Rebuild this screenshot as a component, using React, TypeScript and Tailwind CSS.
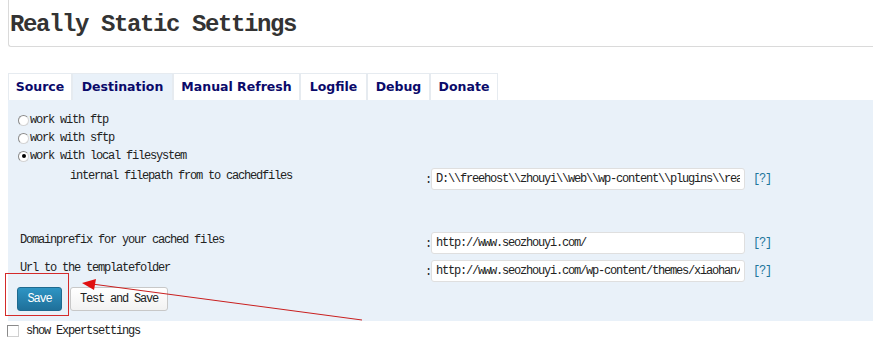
import { useState } from "react";

const mono = "font-['Liberation_Mono',monospace] text-[12px] tracking-[-1.2px] text-[#222]";

const tabs = [
  { name: "Source", w: "w-[64px]" },
  { name: "Destination", w: "w-[101px]" },
  { name: "Manual Refresh", w: "w-[127px]" },
  { name: "Logfile", w: "w-[67px]" },
  { name: "Debug", w: "w-[63px]" },
  { name: "Donate", w: "w-[68px]" },
];

function Radio({ checked }: { checked?: boolean }) {
  return (
    <span className="flex h-[11px] w-[11px] items-center justify-center rounded-full border border-[#8a8a8a] border-b-[#d4d4d4] border-r-[#d4d4d4] bg-white">
      {checked && <span className="h-[4px] w-[4px] rounded-full bg-black" />}
    </span>
  );
}

function Field({ label, value, indent }: { label: string; value: string; indent?: boolean }) {
  return (
    <div className="flex items-start pl-[3px]">
      <div className={`w-[405px] pt-[1px] leading-[14px] ${indent ? "pl-[50px]" : "pl-[0px]"} ${mono}`}>{label}</div>
      <div className={`w-[6px] pt-[5px] leading-[14px] ${mono}`}>:</div>
      <input
        readOnly
        value={value}
        className={`h-[22px] w-[314px] rounded-[3px] border border-[#dfdfdf] bg-white px-[4px] outline-none ${mono}`}
      />
      <a href="#" className={`ml-[8px] pt-[4px] leading-[14px] ${mono} text-[#21759b]`}>
        [?]
      </a>
    </div>
  );
}

export default function App() {
  const [active, setActive] = useState("Destination");
  const [mode, setMode] = useState("local");

  return (
    <div className="relative h-[345px] w-[873px] overflow-hidden bg-white">
      <div className="ml-2 h-[47px] rounded-bl-[3px] border-b border-l border-[#dadada] pl-[1px] pt-[13px]">
        <h2 className="font-['Liberation_Mono',monospace] text-[24px] font-bold leading-[24px] tracking-[-1.4px] text-[#333]">
          Really Static Settings
        </h2>
      </div>

      <div className="ml-2 mt-[26px]">
        <div className="flex h-[27px]">
          {tabs.map((t) => (
            <button
              key={t.name}
              onClick={() => setActive(t.name)}
              className={`h-[27px] ${t.w} border border-b-0 border-[#e6ebf0] font-['DejaVu_Sans',sans-serif] text-[12.5px] font-bold text-[#0a0a6a] ${
                active === t.name ? "bg-[#e9f1f9]" : "bg-white"
              }`}
            >
              {t.name}
            </button>
          ))}
        </div>

        <div className="bg-[#e9f1f9] pb-[10px] pl-[9px] pt-[11px]">
          {[
            ["ftp", "work with ftp"],
            ["sftp", "work with sftp"],
            ["local", "work with local filesystem"],
          ].map(([k, label]) => (
            <div key={k} className="flex h-[18px] items-center pl-[1px]" onClick={() => setMode(k)}>
              <Radio checked={mode === k} />
              <span className={`ml-[1px] ${mono}`}>{label}</span>
            </div>
          ))}

          <div className="mt-[3px]">
            <Field indent label="internal filepath from to cachedfiles" value="D:\\freehost\\zhouyi\\web\\wp-content\\plugins\\really-static\\static\\" />
          </div>
          <div className="mt-[42px]">
            <Field label="Domainprefix for your cached files" value="http://www.seozhouyi.com/" />
          </div>
          <div className="mt-[6px]">
            <Field label="Url to the templatefolder" value="http://www.seozhouyi.com/wp-content/themes/xiaohan/" />
          </div>

          <div className="mt-[5px] flex gap-[8px]">
            <button className={`h-[24px] w-[45px] rounded-[3px] border border-[#1e6a8f] bg-gradient-to-b from-[#2e95c4] to-[#1f709a] ${mono} text-white`}>
              Save
            </button>
            <button className={`h-[24px] w-[98px] rounded-[3px] border border-[#c8c8c8] bg-gradient-to-b from-white to-[#f2f2f2] ${mono}`}>
              Test and Save
            </button>
          </div>
        </div>
      </div>

      <label className="mt-[3px] flex items-center pl-[7px]">
        <span className="h-[12px] w-[12px] border border-[#8a8a8a] border-b-[#d0d0d0] border-r-[#d0d0d0] bg-white" />
        <span className={`ml-[7px] leading-[14px] ${mono}`}>show Expertsettings</span>
      </label>

      {/* annotation overlay */}
      <div className="absolute left-[5px] top-[273px] h-[43px] w-[64px] border border-[#d42a2a]" />
      <svg className="absolute left-0 top-0" width="873" height="345" viewBox="0 0 873 345">
        <line x1="362" y1="320" x2="92" y2="284" stroke="#c91f1f" strokeWidth="1" />
        <polygon points="82,283 96,279 94,290" fill="#e01010" />
      </svg>
    </div>
  );
}
